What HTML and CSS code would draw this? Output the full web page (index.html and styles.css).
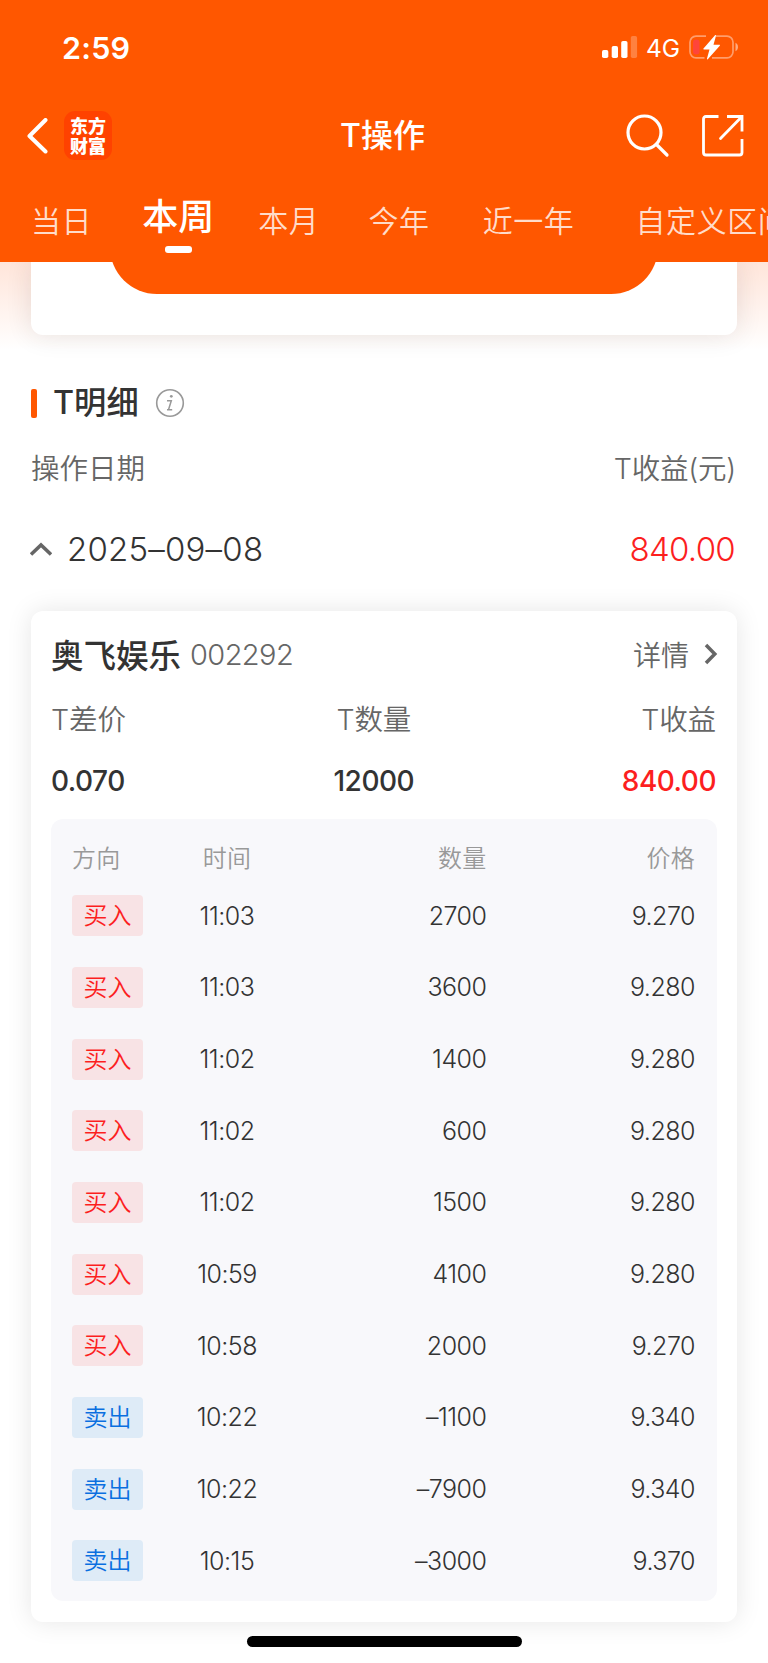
FILE: index.html
```
<!DOCTYPE html>

<html lang="zh-CN">
<head>
    <meta charset="utf-8">
    <title>T操作</title>
    <link rel="stylesheet" href="styles.css">
</head>

<body>

<div class="header">
    <div class="statusBar">
        <span class="clock">2:59</span>
        <svg class="signal" width="36" height="24" viewBox="0 0 36 24">
            <rect x="0" y="14" width="6.3" height="8" rx="1.8" fill="#fff"/>
            <rect x="9.7" y="10" width="6.3" height="12" rx="1.8" fill="#fff"/>
            <rect x="19.2" y="5" width="6.3" height="17" rx="1.8" fill="#fff"/>
            <rect x="28.8" y="0" width="6.3" height="22" rx="1.8" fill="#fff" opacity=".25"/>
        </svg>
        <span class="network">4G</span>
        <svg class="battery" width="51" height="26" viewBox="0 0 51 26">
            <path d="M18 2.2H8a6 6 0 0 0-6 6v9.6a6 6 0 0 0 6 6h8.500M28 2.200h11a6 6 0 0 1 6 6v9.600a6 6 0 0 1-6 6H24" fill="none" stroke="#fff" stroke-width="1.700" opacity=".42"/>
            <path d="M47.500 8.800c3.300 1.200 3.300 7.200 0 8.400z" fill="#fff" opacity=".5"/>
            <rect x="5" y="5.500" width="6.500" height="15" rx="3" fill="#ff453a"/>
            <path d="M27 1.200L15.500 14.600c-.4.500-.2.900.4.900h5.600L19 24.600c-.3 1 .5 1.200 1 .5L31.800 11.700c.4-.5.200-.9-.4-.9h-5.900L28 1.800c.2-.9-.5-1.200-1-.6z" fill="#fff"/>
        </svg>
    </div>

    <div class="navBar">
        <svg class="back" width="22" height="36" viewBox="0 0 22 36">
            <path d="M18.500 2L2.500 18l16 15.500" fill="none" stroke="#fff" stroke-width="4" stroke-linecap="round" stroke-linejoin="round"/>
        </svg>
        <div class="logo"><span>东方</span><span>财富</span></div>
        <h1 class="title">T操作</h1>
        <svg class="search" width="44" height="44" viewBox="0 0 44 44">
            <g fill="none" stroke="#fff" stroke-width="3.200" stroke-linecap="round">
                <circle cx="18.500" cy="18.500" r="16.500"/>
                <path d="M30.500 30.500L41 41"/>
            </g>
        </svg>
        <svg class="share" width="44" height="44" viewBox="0 0 44 44">
            <g fill="none" stroke="#fff" stroke-width="2.800">
                <path d="M17.500 2.500H5Q2.500 2.500 2.500 5v33.500Q2.500 41 5 41h33.500Q41 41 41 38.500V25"/>
                <path d="M26 2.500h15V17.500"/>
                <path d="M40.500 3L19.500 24.500" stroke-linecap="round"/>
            </g>
        </svg>
    </div>

    <div class="tabs">
        <span class="tab">当日</span>
        <span class="tab active">本周</span>
        <span class="tab">本月</span>
        <span class="tab">今年</span>
        <span class="tab">近一年</span>
        <span class="tab">自定义区间</span>
    </div>
</div>

<div class="banner">
    <div class="bannerCard"><div class="bannerShape"></div></div>
</div>

<div class="section">
    <div class="sectionTitle">
        <span class="bar"></span>
        <h2>T明细</h2>
        <svg class="info" width="30" height="30" viewBox="0 0 30 30">
            <circle cx="15" cy="15" r="13.300" fill="none" stroke="#999" stroke-width="1.600"/>
            <circle cx="16.300" cy="8.300" r="1.400" fill="#999"/>
            <path d="M12 12.700h4.300L13.800 20.800q-.3 1 .7 1h2.700M12 21.800h2.500" fill="none" stroke="#999" stroke-width="1.500"/>
        </svg>
    </div>
    <div class="listHead">
        <span>操作日期</span>
        <span>T收益(元)</span>
    </div>
    <div class="dateRow">
        <svg width="22" height="14" viewBox="0 0 22 14">
            <path d="M1 12.500L11 3l10 9.500" fill="none" stroke="#666" stroke-width="3.500"/>
        </svg>
        <span class="date">2025–09–08</span>
        <span class="profit">840.00</span>
    </div>
</div>

<div class="card">
    <div class="stock">
        <span class="stockName">奥飞娱乐</span>
        <span class="stockCode">002292</span>
        <span class="detail">详情</span>
        <svg width="14" height="22" viewBox="0 0 14 22">
            <path d="M2 2l8.800 9L2 20" fill="none" stroke="#666" stroke-width="3.500"/>
        </svg>
    </div>

    <div class="summary">
        <div><span class="label">T差价</span><b>0.070</b></div>
        <div class="mid"><span class="label">T数量</span><b>12000</b></div>
        <div class="last"><span class="label">T收益</span><b class="red">840.00</b></div>
    </div>

    <div class="trades">
        <div class="row head"><span>方向</span><span>时间</span><span>数量</span><span>价格</span></div>
        <div class="row"><i class="buy">买入</i><span>11:03</span><span>2700</span><span>9.270</span></div>
        <div class="row"><i class="buy">买入</i><span>11:03</span><span>3600</span><span>9.280</span></div>
        <div class="row"><i class="buy">买入</i><span>11:02</span><span>1400</span><span>9.280</span></div>
        <div class="row"><i class="buy">买入</i><span>11:02</span><span>600</span><span>9.280</span></div>
        <div class="row"><i class="buy">买入</i><span>11:02</span><span>1500</span><span>9.280</span></div>
        <div class="row"><i class="buy">买入</i><span>10:59</span><span>4100</span><span>9.280</span></div>
        <div class="row"><i class="buy">买入</i><span>10:58</span><span>2000</span><span>9.270</span></div>
        <div class="row"><i class="sell">卖出</i><span>10:22</span><span>–1100</span><span>9.340</span></div>
        <div class="row"><i class="sell">卖出</i><span>10:22</span><span>–7900</span><span>9.340</span></div>
        <div class="row"><i class="sell">卖出</i><span>10:15</span><span>–3000</span><span>9.370</span></div>
    </div>
</div>

<div class="homeBar"></div>

</body>
</html>
```
FILE: styles.css
```
*{
    box-sizing: border-box;
}
body{
    position: relative;
    width: 768px;
    height: 1663px;
    margin: 0;
    overflow: hidden;
    background: #fff;
    color: #333;
    font-family: "Inter", "Noto Sans CJK SC", sans-serif;
}
h1, h2{
    margin: 0;
    font-weight: 500;
}
svg{
    display: block;
    flex: none;
}

/* orange top */
.header{
    height: 262px;
    background: #ff5700;
    color: #fff;
    overflow: hidden;
}
.statusBar{
    display: flex;
    align-items: center;
    height: 94px;
    padding: 0 29px 0 62px;
}
.clock{
    flex: 1;
    font-size: 30.5px;
    font-weight: 560;
    letter-spacing: 0.2px;
}
.signal{
    margin-top: 2px;
}
.network{
    margin: 2px 8px 0 8px;
    font-size: 24.5px;
    letter-spacing: 0;
}
.navBar{
    display: flex;
    align-items: center;
    height: 84px;
    padding: 0 23px 0 27px;
}
.logo{
    display: flex;
    flex-direction: column;
    width: 48px;
    height: 49px;
    margin: -2px 1px 0 15px;
    padding-top: 4px;
    border-radius: 11px;
    background: #ff4200;
    font-family: "Noto Sans CJK SC", sans-serif;
    font-size: 18px;
    font-weight: 900;
    line-height: 20px;
    text-align: center;
}
.title{
    flex: 1;
    padding-left: 26px;
    margin-top: -7px;
    font-size: 32px;
    text-align: center;
}
.share{
    margin-left: 31px;
}
.tabs{
    display: flex;
    height: 84px;
    padding-left: 31px;
    white-space: nowrap;
}
.tab{
    flex: none;
    margin-right: 49px;
    padding-top: 21px;
    font-size: 30px;
    font-weight: 350;
    line-height: 44px;
    letter-spacing: 0.6px;
    color: #ffdcca;
}
.tab:first-child{
    margin-right: 50px;
}
.tab:nth-child(4){
    margin-right: 53px;
}
.tab:nth-child(5){
    margin-right: 61px;
}
.tab.active{
    display: flex;
    flex-direction: column;
    align-items: center;
    margin-right: 44px;
    padding-top: 17px;
    font-size: 36px;
    font-weight: 500;
    letter-spacing: 0;
    color: #fff;
}
.tab.active::after{
    content: "";
    width: 27px;
    height: 7px;
    margin-top: 7px;
    border-radius: 3px;
    background: #fff;
}

.banner{
    height: 98px;
    padding: 0 31px;
    overflow: hidden;
    background: linear-gradient(#ffe5da, #fff 90%);
}
.bannerCard{
    height: 73px;
    border-radius: 0 0 12px 12px;
    background: #fff;
    box-shadow: 0 0 26px rgba(60, 40, 30, 0.12);
}
.bannerShape{
    width: 548px;
    height: 32px;
    margin-left: 79px;
    overflow: hidden;
}
.bannerShape::before{
    content: "";
    display: block;
    height: 96px;
    margin-top: -64px;
    border-radius: 47px;
    background: #ff5700;
}

/* section head */
.section{
    height: 251px;
    padding: 21px 33px 0 31px;
}
.sectionTitle{
    display: flex;
    align-items: center;
    height: 44px;
}
.sectionTitle h2{
    margin: -6px 16px 0 16px;
    font-size: 32.3px;
}
.bar{
    width: 6px;
    height: 29px;
    border-radius: 2px;
    background: #ff5700;
}
.listHead{
    display: flex;
    justify-content: space-between;
    margin-top: 23px;
    margin-right: -1px;
    font-size: 28.5px;
    font-weight: 350;
    line-height: 42px;
    color: #666;
}
.listHead span:last-child{
    letter-spacing: -0.2px;
}
.dateRow{
    display: flex;
    align-items: center;
    margin-top: 36px;
    height: 46px;
}
.dateRow svg{
    margin-left: -1px;
}
.date{
    flex: 1;
    margin-left: 15px;
    font-size: 33px;
    font-weight: 350;
    letter-spacing: 0.2px;
}
.profit{
    font-size: 33px;
    font-weight: 350;
    letter-spacing: -0.7px;
    color: #fc1f1f;
}
.red{
    color: #fc1f1f;
}

.card{
    height: 1011px;
    margin: 0 31px;
    padding: 20px;
    border-radius: 12px;
    background: #fff;
    box-shadow: 0 0 26px rgba(0, 0, 0, 0.1);
}
.stock{
    display: flex;
    align-items: center;
    height: 46px;
    margin-bottom: 2px;
}
.stockName{
    margin-top: -2px;
    font-size: 32.5px;
    font-weight: 500;
}
.stockCode{
    flex: 1;
    margin-left: 9px;
    font-size: 29px;
    font-weight: 325;
    letter-spacing: -0.6px;
    color: #666;
}
.detail{
    margin-right: 15px;
    font-size: 28px;
    font-weight: 350;
    color: #666;
}
.stock svg{
    margin-right: -1px;
}
.summary{
    display: flex;
    justify-content: space-between;
    height: 140px;
    padding: 20px 1px 0 0;
}
.summary div{
    display: flex;
    flex-direction: column;
}
.summary .mid{
    align-items: center;
}
.summary .last{
    align-items: flex-end;
}
.label{
    font-size: 28.5px;
    font-weight: 350;
    line-height: 42px;
    letter-spacing: -0.1px;
    color: #666;
}
.summary b{
    margin-top: 19px;
    font-size: 28px;
    font-weight: 500;
    line-height: 42px;
    letter-spacing: -0.5px;
}

/* trades table */
.trades{
    height: 782px;
    padding: 16px 22px 0 21px;
    border-radius: 12px;
    background: #f8f8fb;
}
.row{
    display: grid;
    grid-template-columns: 103px 104px 207.5px 1fr;
    align-items: center;
    height: 71.67px;
    font-size: 25px;
    font-weight: 350;
    letter-spacing: -0.5px;
    text-align: right;
}
.row :nth-child(2){
    text-align: center;
}
.row.head{
    height: 42px;
    margin-bottom: 3px;
    font-size: 24px;
    letter-spacing: 0.3px;
    color: #999;
}
.row.head :first-child{
    text-align: left;
}
.buy, .sell{
    width: 71px;
    height: 41px;
    border-radius: 4px;
    font-size: 24px;
    font-style: normal;
    line-height: 41px;
    letter-spacing: 0;
    text-align: center;
}
.buy{
    background: #f8e3e5;
    color: #fc1f1f;
}
.sell{
    background: #deebf7;
    color: #0a6fe0;
}

.homeBar{
    position: absolute;
    left: 247px;
    top: 1636px;
    width: 275px;
    height: 11px;
    border-radius: 6px;
    background: #000;
}
```
